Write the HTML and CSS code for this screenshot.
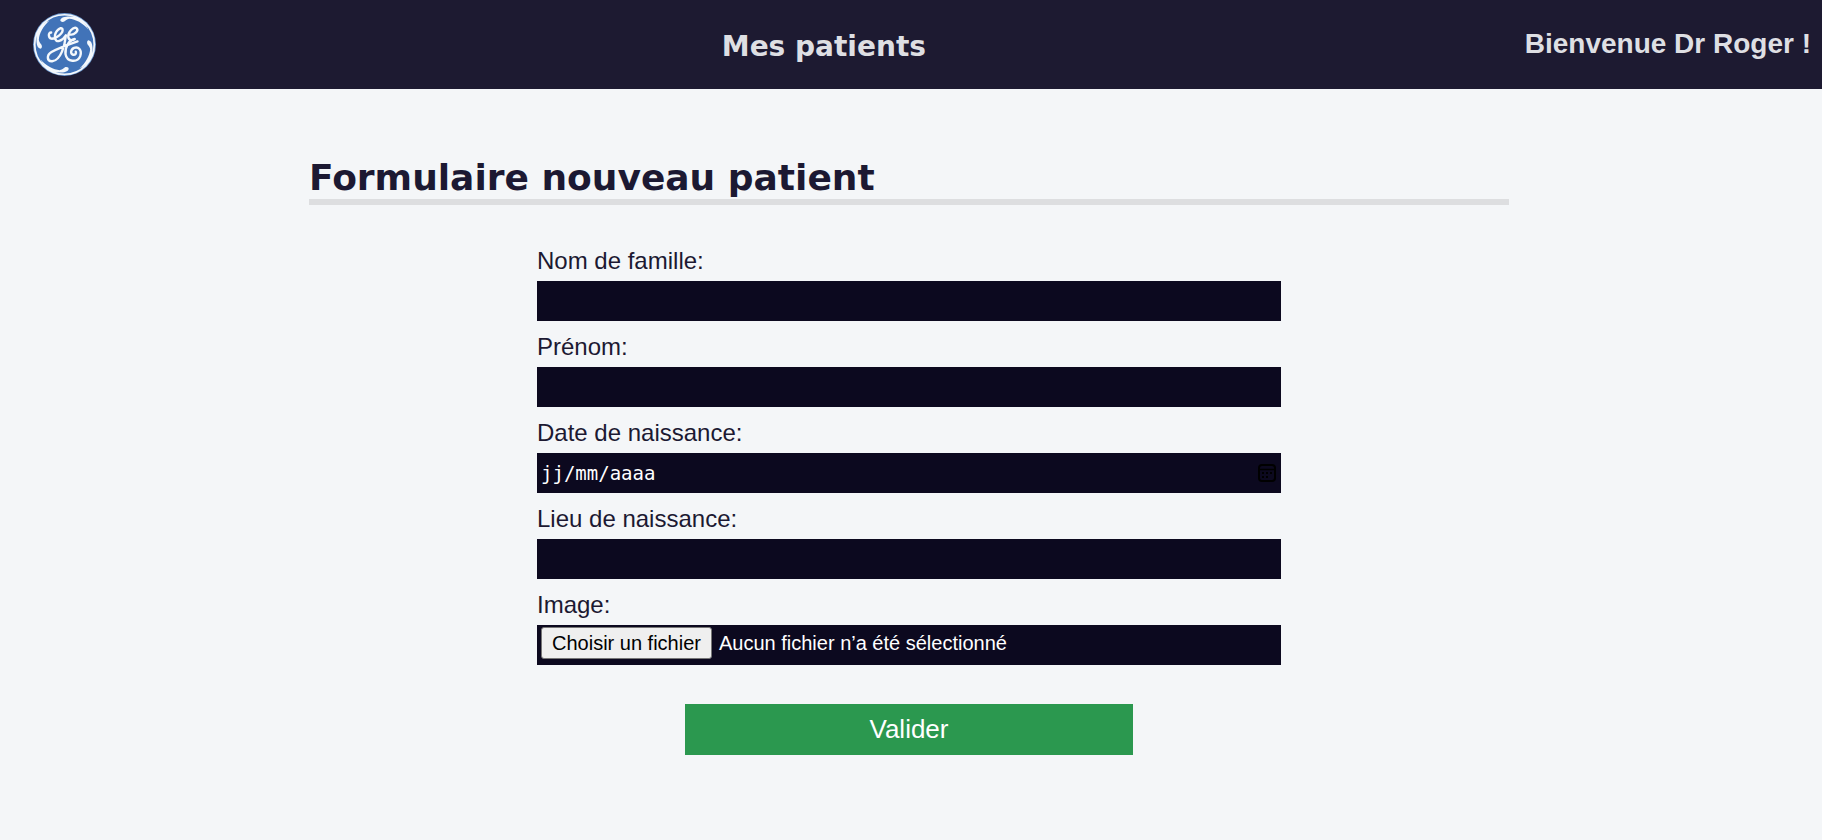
FILE: index.html
```html
<!DOCTYPE html>
<html lang="fr">
<head>
<meta charset="utf-8">
<title>Formulaire nouveau patient</title>
<link rel="stylesheet" href="styles.css">
</head>
<body>
<header class="topbar">
  <a class="brand" href="#" aria-label="Accueil">
    <svg class="logo" viewBox="99 37 190 190" aria-hidden="true">
      <circle cx="194" cy="132" r="92" fill="#6f9bd2"/>
      <circle cx="194" cy="132" r="87" fill="#4173b8" stroke="#f4f8fc" stroke-width="5"/>
      <g fill="#f4f8fc">
        <path id="swirl" d="M182 60C184 49 214 47 234 54C248 61 258 74 264 88C248 70 226 58 208 57C198 58 196 66 189 66C184 66 181 64 182 60Z"/>
        <use href="#swirl" transform="rotate(90 194 132)"/>
        <use href="#swirl" transform="rotate(180 194 132)"/>
        <use href="#swirl" transform="rotate(270 194 132)"/>
      </g>
      <g fill="none" stroke="#f4f8fc" stroke-width="7" stroke-linecap="round" stroke-linejoin="round">
        <path d="M155 97C145 97 147 114 156 115C170 115 192 98 188 87C184 78 164 94 166 112C168 130 188 122 198 105C195 134 184 178 158 181C142 182 141 163 156 154C178 142 206 132 232 123"/>
        <path d="M211 103C222 105 236 92 230 85C221 78 203 96 205 110C206 121 218 121 224 116C206 120 195 140 197 160C201 184 232 186 240 166C246 148 234 137 222 142C211 147 211 160 219 162C226 163 229 158 227 153"/>
      </g>
    </svg>
  </a>
  <h2 class="page-name">Mes patients</h2>
  <p class="welcome">Bienvenue Dr Roger !</p>
</header>
<main class="content">
  <h1 class="title">Formulaire nouveau patient</h1>
  <form class="form">
    <label class="label" for="nom">Nom de famille:</label>
    <input class="field" id="nom" type="text">
    <label class="label" for="prenom">Prénom:</label>
    <input class="field" id="prenom" type="text">
    <label class="label" for="naissance">Date de naissance:</label>
    <div class="field date">
      <input class="date-input" id="naissance" type="text" placeholder="jj/mm/aaaa">
      <button class="date-button" type="button" aria-label="Ouvrir le calendrier">
        <svg class="calendar" viewBox="0 0 20 20" aria-hidden="true">
          <rect x="2" y="2" width="16" height="16" rx="3" fill="none" stroke="#000" stroke-width="2"/>
          <path d="M2 6.500H18" stroke="#000" stroke-width="1.500"/>
          <path d="M5 9h2v2H5zM9 9h2v2H9zM13 9h2v2h-2zM5 13h2v2H5zM9 13h2v2H9z"/>
        </svg>
      </button>
    </div>
    <label class="label" for="lieu">Lieu de naissance:</label>
    <input class="field" id="lieu" type="text">
    <label class="label" for="image">Image:</label>
    <div class="field file">
      <input class="file-input" id="image" type="file">
      <span class="file-button">Choisir un fichier</span>
      <span class="file-status">Aucun fichier n’a été sélectionné</span>
    </div>
    <button class="submit" type="submit">Valider</button>
  </form>
</main>
</body>
</html>
```
FILE: styles.css
```css
* {
  box-sizing: border-box;
}

body {
  margin: 0;
  background: #f4f6f8;
  color: #1c1932;
  font-family: "Liberation Sans", Arial, sans-serif;
}

.topbar {
  display: flex;
  justify-content: space-between;
  align-items: center;
  padding: 12px 11px 12px 32px;
  background: #1d1a31;
  color: #dedfe3;
}

.brand {
  display: block;
  padding-right: 26px;
}

.logo {
  display: block;
  width: 65px;
  height: 65px;
}

.page-name {
  margin: 0;
  padding-top: 4px;
  font: bold 28px/36px "DejaVu Sans", Verdana, sans-serif;
}

.welcome {
  margin: 0;
  padding-bottom: 2px;
  font-size: 28px;
  font-weight: bold;
  line-height: 32px;
}

.content {
  padding: 68px 4px 64px 0;
}

.title {
  max-width: 1200px;
  margin: 0 auto 40px;
  border-bottom: 6px solid #dddee0;
  font: bold 36px/42px "DejaVu Sans", Verdana, sans-serif;
}

.form {
  display: flex;
  flex-direction: column;
  max-width: 744px;
  margin: 0 auto;
}

.label {
  font-size: 24px;
  line-height: 32px;
  margin-bottom: 4px;
}

.field {
  width: 100%;
  height: 40px;
  margin: 0 0 10px;
  padding: 2px 4px;
  border: 0;
  background: #0c091f;
  color: #fff;
  font: 20px "Liberation Sans", Arial, sans-serif;
}

.date {
  display: flex;
  align-items: center;
}

.date-input {
  flex: 1;
  min-width: 0;
  padding: 0;
  border: 0;
  background: none;
  color: #fff;
  font: 19px "DejaVu Sans Mono", monospace;
}

.date-input::placeholder {
  color: #fff;
  opacity: 1;
}

.date-button {
  padding: 0;
  border: 0;
  background: none;
}

.calendar {
  display: block;
  width: 20px;
  height: 20px;
}

.file {
  position: relative;
  display: flex;
  align-items: flex-start;
  gap: 7px;
}

.file-input {
  position: absolute;
  inset: 0;
  width: 100%;
  opacity: 0;
}

.file-button {
  padding: 3px 10px;
  border: 1px solid #767676;
  border-radius: 3px;
  background: #efefef;
  color: #000;
  line-height: 24px;
}

.file-status {
  line-height: 32px;
}

.submit {
  width: 448px;
  max-width: 100%;
  margin: 29px auto 0;
  padding: 10px;
  border: 0;
  background: #2b984f;
  color: #fff;
  font: 26px/31px "Liberation Sans", Arial, sans-serif;
}
```
